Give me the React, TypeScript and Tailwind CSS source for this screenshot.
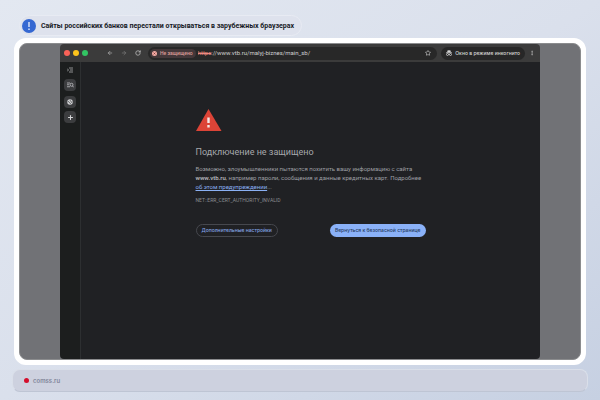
import type { ReactNode } from "react";
import { ArrowLeft, ArrowRight, RotateCw, Star, EllipsisVertical, Plus } from "lucide-react";

function SideButton({ label, children, filled = true }: { label: string; children: ReactNode; filled?: boolean }) {
  return (
    <button
      aria-label={label}
      className={
        filled
          ? "flex size-3 items-center justify-center rounded-[4px] bg-[#3c3d3f] text-[#d5d6d8]"
          : "flex size-3 items-center justify-center text-[#b4b5b7]"
      }
    >
      {children}
    </button>
  );
}

function Toolbar() {
  return (
    <div className="flex h-[18px] shrink-0 items-center bg-[#3b3b3b] pr-[5px] pl-1 text-[#d4d4d4]">
      <div className="flex gap-[3px]">
        <span className="size-[6px] rounded-full bg-[#fa6258]" />
        <span className="size-[6px] rounded-full bg-[#fcc41c]" />
        <span className="size-[6px] rounded-full bg-[#32c463]" />
      </div>
      <div className="ml-[19px] flex gap-2">
        <button aria-label="Назад"><ArrowLeft className="size-[6px] text-[#a5a5a5]" strokeWidth={3} /></button>
        <button aria-label="Вперёд"><ArrowRight className="size-[6px] text-[#777777]" strokeWidth={3} /></button>
        <button aria-label="Обновить"><RotateCw className="size-[6px] text-[#bdbdbd]" strokeWidth={3} /></button>
      </div>
      <div className="ml-[7px] flex h-[13px] min-w-0 flex-1 items-center rounded-full bg-[#282828] pr-[6px] pl-[2px]">
        <span className="flex h-[9px] shrink-0 items-center gap-[3px] rounded-full bg-[#44383a] pr-[3px] pl-[2px] font-['Roboto','Liberation_Sans',sans-serif] text-[5px] leading-none font-medium text-[#dd9d98]">
          <svg viewBox="0 0 10 10" className="size-[5px]">
            <circle cx="5" cy="5" r="5" fill="#f3aaa4" />
            <path d="m3.2 3.2 3.6 3.6m0-3.6-3.6 3.6" stroke="#733" strokeWidth="1.4" />
          </svg>
          Не защищено
        </span>
        <span className="ml-[2px] flex-1 truncate font-['Roboto','Liberation_Sans',sans-serif] text-[6px] leading-[10px] text-[#d0d0d0]">
          <span className="text-[#ed8a82] line-through">https</span>://www.vtb.ru/malyj-biznes/main_sb/
        </span>
        <button aria-label="Добавить в закладки"><Star className="size-[6px]" strokeWidth={2.5} /></button>
      </div>
      <button className="ml-1 flex h-[13px] shrink-0 items-center gap-[3px] rounded-full bg-[#272727] px-[5px] text-[5px] leading-none font-medium text-[#d7d7d7]">
        <svg viewBox="0 0 12 12" className="size-[6px]" fill="none" stroke="currentColor" strokeWidth="1.5">
          <path d="M3.5 5V1.5h5V5" fill="currentColor" />
          <path d="M0 5.5h12M5 9h2" />
          <circle cx="3" cy="9" r="2" />
          <circle cx="9" cy="9" r="2" />
        </svg>
        Окно в режиме инкогнито
      </button>
      <button aria-label="Меню" className="ml-1"><EllipsisVertical className="size-[6px]" strokeWidth={2} /></button>
    </div>
  );
}

function Sidebar() {
  return (
    <nav className="flex w-[21px] shrink-0 flex-col items-center border-r border-[#2d2f31] bg-[#1c1e1e] pt-[2px]">
      <SideButton label="Развернуть панель" filled={false}>
        <svg viewBox="0 0 12 12" className="size-[6px]" fill="none" stroke="currentColor" strokeWidth="1.5">
          <path d="M4 2h8M6 6h6M4 10h8M0 3l3 3-3 3" />
        </svg>
      </SideButton>
      <div className="mt-[3px] flex flex-col gap-[5px]">
        <SideButton label="Поиск вкладок">
          <svg viewBox="0 0 14 12" className="h-[6px] w-[7px]" fill="none" stroke="currentColor" strokeWidth="1.4">
            <path d="M0 2h6M0 5.5h4M0 9.5h6M11 8l3 3" />
            <circle cx="9" cy="5.5" r="3" />
          </svg>
        </SideButton>
        <div className="flex flex-col gap-[3px]">
          <SideButton label="Текущая вкладка">
            <svg viewBox="0 0 12 12" className="size-[6px]">
              <circle cx="6" cy="6" r="5.5" fill="currentColor" />
              <path d="M1.5 5.5c2.5-1 3 .5 3.5 2s2 0 2 2.5M6.5 1.5C6 4 8 3.5 8 5.5s2 1 2.5.5" fill="none" stroke="#3c3d3f" strokeWidth="1.5" />
            </svg>
          </SideButton>
          <SideButton label="Новая вкладка">
            <Plus className="size-[7px]" strokeWidth={3.5} />
          </SideButton>
        </div>
      </div>
    </nav>
  );
}

function Warning() {
  return (
    <main className="flex-1 bg-[#202124] pt-[47px] text-[#9d9fa3]">
      <div className="mx-auto w-[230px]">
        <svg viewBox="0 0 26 23" className="h-[23px] w-[26px]">
          <path d="M12.5 0 25.500 22H0Z" fill="#dc4437" />
          <path d="M12.5 8.500v5.500m0 2v2.500" stroke="#f4e9e7" strokeWidth="2.4" />
        </svg>
        <div className="font-['Roboto','Liberation_Sans',sans-serif]">
          <h1 className="mt-[14px] text-[9px] leading-[13px] text-[#a6a8ac]">Подключение не защищено</h1>
          <p className="mt-[5px] text-[6px] leading-[9px]">
            Возможно, злоумышленники пытаются похитить вашу информацию с сайта{" "}
            <b className="font-semibold text-[#b3b5b9]">www.vtb.ru</b>, например пароли, сообщения и данные кредитных
            карт. Подробнее{" "}
            <a href="#warning" className="text-[#8ab0f3] underline">об этом предупреждении</a>...
          </p>
          <p className="mt-[6px] text-[5px] leading-[7px] text-[#8a8c90]">NET::ERR_CERT_AUTHORITY_INVALID</p>
        </div>
        <div className="mt-5 flex justify-between">
          <button className="h-[13px] rounded-full border border-[#46484e] px-[5px] text-[5px] leading-none font-medium text-[#83a5e4]">
            Дополнительные настройки
          </button>
          <button className="h-[13px] rounded-full bg-[#8ab1f8] px-[5px] text-[5px] leading-none font-medium text-[#263b62]">
            Вернуться к безопасной странице
          </button>
        </div>
      </div>
    </main>
  );
}

export default function App() {
  return (
    <div className="flex min-h-screen flex-col bg-linear-to-br from-[#e3e8f1] via-[#dae0ec] to-[#c6d0e2] px-3 pt-[15px] pb-2 font-['Inter','Liberation_Sans',sans-serif]">
      <header className="ml-[7px] flex h-[21px] w-fit items-center gap-[5px] rounded-full border border-[#e8ebf3] bg-[#dee2ed] pr-[7px] pl-[2px]">
        <svg viewBox="0 0 14 14" className="size-[14px]">
          <circle cx="7" cy="7" r="7" fill="#3568d2" />
          <path d="M7 3v5m0 1.5V11" stroke="#edf2fd" strokeWidth="1.3" />
        </svg>
        <h2 className="font-['Roboto','Liberation_Sans',sans-serif] text-[7px] leading-[10px] font-bold text-[#171a26]">
          Сайты российских банков перестали открываться в зарубежных браузерах
        </h2>
      </header>
      <div className="mx-[2px] mt-[2px] flex flex-1 rounded-xl border-[5px] border-white bg-white">
        <div className="flex flex-1 rounded-lg border border-[#8b8c8e] bg-[#717276] px-10">
          <div className="flex min-w-0 flex-1 flex-col overflow-hidden rounded-[4px]">
            <Toolbar />
            <div className="flex flex-1">
              <Sidebar />
              <Warning />
            </div>
          </div>
        </div>
      </div>
      <footer className="mt-1 flex h-[23px] items-center gap-1 rounded-lg border border-[#dadfe9] border-b-[#bec5d4] bg-[#cdd1df] px-[11px] text-[6px] font-semibold text-[#82869a]">
        <span className="size-[5px] rounded-full bg-[#d40e2c]" />
        comss.ru
      </footer>
    </div>
  );
}
